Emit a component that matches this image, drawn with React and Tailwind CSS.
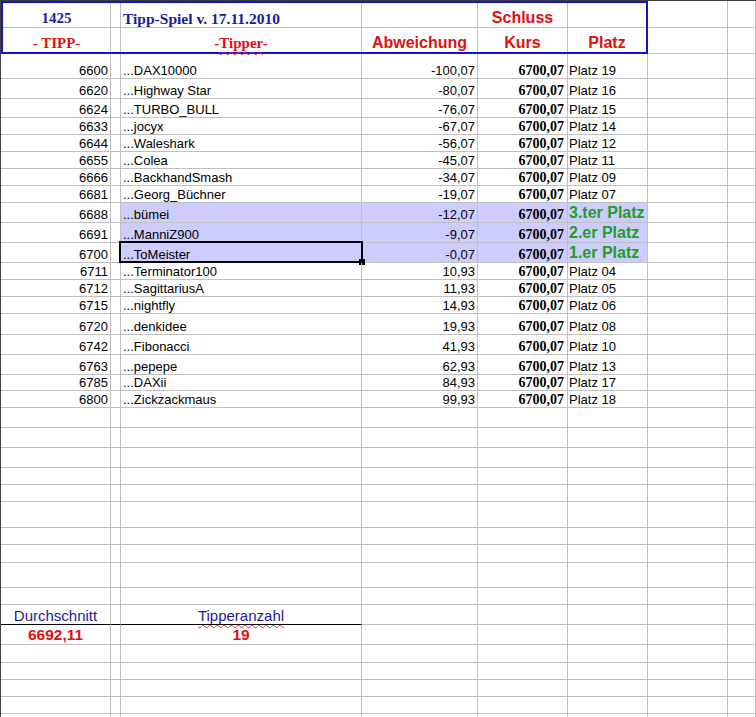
import React from "react";

const GRID = "border-[#c0c0c0]";
const SANS = "font-['Liberation_Sans',Arial,sans-serif]";
const SERIF = "font-['Liberation_Serif','Times_New_Roman',serif]";
const RED = "text-[#dd1111]";
const BLUE = "text-[#1c1c9c]";

const HCLS = {
  16: "h-[16px]",
  17: "h-[17px]",
  18: "h-[18px]",
  19: "h-[19px]",
  20: "h-[20px]",
  21: "h-[21px]",
  25: "h-[25px]",
  26: "h-[26px]",
};

const rows = [
  ["6600", "DAX10000", "-100,07", "Platz 19", 25],
  ["6620", "Highway Star", "-80,07", "Platz 16", 20],
  ["6624", "TURBO_BULL", "-76,07", "Platz 15", 19],
  ["6633", "jocyx", "-67,07", "Platz 14", 17],
  ["6644", "Waleshark", "-56,07", "Platz 12", 17],
  ["6655", "Colea", "-45,07", "Platz 11", 17],
  ["6666", "BackhandSmash", "-34,07", "Platz 09", 17],
  ["6681", "Georg_Büchner", "-19,07", "Platz 07", 17],
  ["6688", "bümei", "-12,07", "3.ter Platz", 20, true],
  ["6691", "ManniZ900", "-9,07", "2.er Platz", 20, true],
  ["6700", "ToMeister", "-0,07", "1.er Platz", 20, true, true],
  ["6711", "Terminator100", "10,93", "Platz 04", 17],
  ["6712", "SagittariusA", "11,93", "Platz 05", 17],
  ["6715", "nightfly", "14,93", "Platz 06", 17],
  ["6720", "denkidee", "19,93", "Platz 08", 21],
  ["6742", "Fibonacci", "41,93", "Platz 10", 20],
  ["6763", "pepepe", "62,93", "Platz 13", 20],
  ["6785", "DAXii", "84,93", "Platz 17", 16],
  ["6800", "Zickzackmaus", "99,93", "Platz 18", 17],
];

const emptyBefore = [20, 20, 20, 17, 17, 26, 17, 18, 25, 17];
const emptyAfter = [18, 17, 17, 17, 17];

function C({ w, className = "", children }) {
  return (
    <div
      className={`${w} shrink-0 border-r border-b ${GRID} flex items-end overflow-hidden whitespace-nowrap ${className}`}
    >
      {children}
    </div>
  );
}

function EmptyRow({ h }) {
  return (
    <div className={`flex ${HCLS[h]}`}>
      <C w="w-[110px]" />
      <C w="w-[10px]" />
      <C w="w-[241px]" />
      <C w="w-[116px]" />
      <C w="w-[90px]" />
      <C w="w-[80px]" />
      <C w="w-[80px]" />
      <C w="w-[28px]" />
    </div>
  );
}

function DataRow({ r }) {
  const [tipp, name, abw, platz, h, hl, sel] = r;
  const bg = hl ? "bg-[#ccccff]" : "";
  return (
    <div className={`flex ${HCLS[h]} ${SANS} text-[13px] leading-[15px] text-black`}>
      <C w="w-[110px]" className="justify-end pr-[2px]">
        {tipp}
      </C>
      <C w="w-[10px]" />
      <C w="w-[241px]" className={`pl-[2px] relative overflow-visible ${bg}`}>
        <span>...{name}</span>
        {sel && (
          <div className="absolute -left-[2px] -top-[2px] -right-[2px] -bottom-[1px] border-2 border-black">
            <div className="absolute -right-[4px] -bottom-[4px] w-[6px] h-[6px] bg-black" />
          </div>
        )}
      </C>
      <C w="w-[116px]" className={`justify-end pr-[2px] ${bg}`}>
        {abw}
      </C>
      <C w="w-[90px]" className={`justify-end pr-[3px] ${bg}`}>
        <span className={`${SERIF} font-bold text-[14px] leading-[15px]`}>6700,07</span>
      </C>
      <C w="w-[80px]" className={`pl-[1px] ${bg}`}>
        {hl ? (
          <span className="font-bold text-[16px] leading-[18px] text-[#22a022]">{platz}</span>
        ) : (
          platz
        )}
      </C>
      <C w="w-[80px]" />
      <C w="w-[28px]" />
    </div>
  );
}

export default function App() {
  return (
    <div className="w-[756px] h-[717px] overflow-hidden bg-white border-l border-t border-[#404040]">
      {/* header */}
      <div className="flex h-[53px]">
        <div className="w-[647px] h-[53px] shrink-0 border-2 border-[#1010e0] flex flex-col">
          <div className="flex h-[25px]">
            <C w="w-[108px]" className={`justify-center ${SERIF} font-bold text-[15px] leading-[17px] ${BLUE}`}>
              1425
            </C>
            <C w="w-[10px]" />
            <C w="w-[241px]" className={`pl-[2px] ${SERIF} font-bold text-[15.5px] leading-[17px] ${BLUE}`}>
              Tipp-Spiel v. 17.11.2010
            </C>
            <C w="w-[116px]" />
            <C w="w-[90px]" className={`justify-center ${SANS} font-bold text-[16px] leading-[18px] ${RED}`}>
              Schluss
            </C>
            <div className={`w-[78px] shrink-0 border-b ${GRID}`} />
          </div>
          <div className="flex h-[24px]">
            <div className={`w-[108px] shrink-0 border-r ${GRID} flex items-end justify-center ${SERIF} font-bold text-[15px] leading-[17px] ${RED}`}>
              - TIPP-
            </div>
            <div className={`w-[10px] shrink-0 border-r ${GRID}`} />
            <div className={`w-[241px] shrink-0 border-r ${GRID} flex items-end justify-center ${SERIF} font-bold text-[15px] leading-[17px] ${RED}`}>
              <span>
                -
                <span className="underline decoration-wavy decoration-[#e03030] decoration-1 underline-offset-[3px]">
                  Tipper
                </span>
                -
              </span>
            </div>
            <div className={`w-[116px] shrink-0 border-r ${GRID} flex items-end justify-center ${SANS} font-bold text-[16px] leading-[18px] ${RED}`}>
              Abweichung
            </div>
            <div className={`w-[90px] shrink-0 border-r ${GRID} flex items-end justify-center ${SANS} font-bold text-[16px] leading-[18px] ${RED}`}>
              Kurs
            </div>
            <div className={`w-[78px] shrink-0 flex items-end justify-center ${SANS} font-bold text-[16px] leading-[18px] ${RED}`}>
              Platz
            </div>
          </div>
        </div>
        <div className="flex flex-col">
          <div className="flex h-[27px]">
            <C w="w-[80px]" />
            <C w="w-[28px]" />
          </div>
          <div className="flex h-[26px]">
            <C w="w-[80px]" />
            <C w="w-[28px]" />
          </div>
        </div>
      </div>

      {/* data rows */}
      {rows.map((r) => (
        <DataRow key={r[0]} r={r} />
      ))}

      {emptyBefore.map((h, i) => (
        <EmptyRow key={"b" + i} h={h} />
      ))}

      {/* Durchschnitt / Tipperanzahl labels */}
      <div className={`flex h-[20px] ${SANS}`}>
        <C w="w-[110px]" className={`justify-center text-[15px] leading-[17px] ${BLUE} border-b-black`}>
          Durchschnitt
        </C>
        <C w="w-[10px]" className="border-b-black" />
        <C w="w-[241px]" className={`justify-center text-[15px] leading-[17px] ${BLUE} border-b-black overflow-visible`}>
          <span className="underline decoration-wavy decoration-[#e03030] decoration-1 underline-offset-[3px]">
            Tipperanzahl
          </span>
        </C>
        <C w="w-[116px]" />
        <C w="w-[90px]" />
        <C w="w-[80px]" />
        <C w="w-[80px]" />
        <C w="w-[28px]" />
      </div>

      {/* values */}
      <div className={`flex h-[20px] ${SANS}`}>
        <C w="w-[110px]" className={`justify-center font-bold text-[15.5px] leading-[18px] ${RED}`}>
          6692,11
        </C>
        <C w="w-[10px]" />
        <C w="w-[241px]" className={`justify-center font-bold text-[15.5px] leading-[18px] ${RED}`}>
          19
        </C>
        <C w="w-[116px]" />
        <C w="w-[90px]" />
        <C w="w-[80px]" />
        <C w="w-[80px]" />
        <C w="w-[28px]" />
      </div>

      {emptyAfter.map((h, i) => (
        <EmptyRow key={"a" + i} h={h} />
      ))}
    </div>
  );
}
